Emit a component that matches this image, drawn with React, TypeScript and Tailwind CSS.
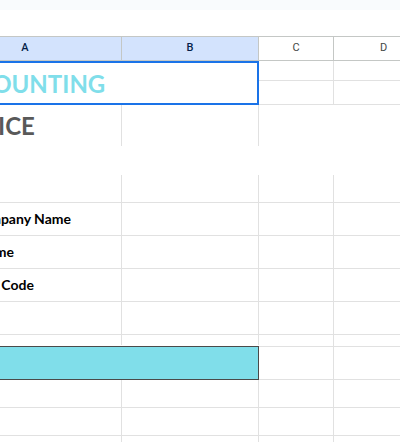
import React from 'react';

const labelFont = { fontFamily: 'Lato, "Noto Sans", sans-serif' };

function LeftRow({ h, text, pad = 'pl-[43px]', bottom = true, lines = true }: { h: string; text?: string; pad?: string; bottom?: boolean; lines?: boolean }) {
    return (
        <div className={`flex ${h} border-b ${bottom && lines ? 'border-[#e1e1e1]' : 'border-transparent'}`}>
            <div className={`w-[193px] shrink-0 border-r ${lines ? 'border-[#e1e1e1]' : 'border-transparent'} flex items-end ${pad} pb-[8px] overflow-hidden`}>
                {text && <span className="text-[14px] leading-[17px] font-bold text-black whitespace-nowrap" style={labelFont}>{text}</span>}
            </div>
            <div className={`w-[137px] shrink-0 border-r ${lines ? 'border-[#e1e1e1]' : 'border-transparent'}`} />
        </div>
    );
}

function RightRow({ h, bottom = true, midLine = true, lines = true }: { h: string; bottom?: boolean; midLine?: boolean; lines?: boolean }) {
    return (
        <div className={`flex ${h} border-b ${bottom && lines ? 'border-[#e1e1e1]' : 'border-transparent'}`}>
            <div className={`w-[75px] shrink-0 border-r ${midLine && lines ? 'border-[#e1e1e1]' : 'border-transparent'}`} />
            <div className={`w-[100px] shrink-0 border-r ${lines ? 'border-[#e1e1e1]' : 'border-transparent'}`} />
        </div>
    );
}

export default function App() {
    return (
        <div className="w-[400px] h-[442px] overflow-hidden bg-white relative">
            {/* toolbar edge */}
            <div className="h-[10px] bg-[#f9fbfd]" />
            <div className="h-[26px]" />

            {/* column headers */}
            <div className="flex h-[25px] -ml-[71px] border-y border-[#c4c7c5] text-[11px]" style={{ fontFamily: 'Roboto, Arial, sans-serif' }}>
                <div className="w-[193px] shrink-0 bg-[#d3e3fd] border-r border-[#c4c7c5] flex items-center justify-center font-medium text-[#041e49]">A</div>
                <div className="w-[137px] shrink-0 bg-[#d3e3fd] border-r border-[#c4c7c5] flex items-center justify-center font-medium text-[#041e49]">B</div>
                <div className="w-[75px] shrink-0 border-r border-[#c4c7c5] flex items-center justify-center text-[#444746]">C</div>
                <div className="w-[100px] shrink-0 border-r border-[#c4c7c5] flex items-center justify-center text-[#444746]">D</div>
                <div className="flex-1" />
            </div>

            {/* sheet body, scrolled so column A starts off-screen */}
            <div className="flex -ml-[71px]">
                <div className="w-[330px] shrink-0 flex flex-col">
                    <div className="h-[44px] border-2 border-[#1a73e8] flex items-end pl-[14px] pb-[5px] overflow-hidden">
                        <span className="text-[24px] leading-[29px] font-bold text-[#80deea] whitespace-nowrap" style={labelFont}>ACCOUNTING</span>
                    </div>
                    <div className="flex h-[41px]">
                        <div className="w-[193px] shrink-0 border-r border-[#e1e1e1] flex items-end pl-[8px] pb-[6px] overflow-hidden">
                            <span className="text-[24px] leading-[29px] font-bold text-[#595959] whitespace-nowrap" style={labelFont}>INVOICE</span>
                        </div>
                        <div className="w-[137px] shrink-0 border-r border-[#e1e1e1]" />
                    </div>
                    <LeftRow h="h-[29px]" lines={false} />
                    <LeftRow h="h-[28px]" />
                    <LeftRow h="h-[33px]" text="Company Name" />
                    <LeftRow h="h-[33px]" text="Name" pad="pl-[48px]" />
                    <LeftRow h="h-[33px]" text="Zip Code" pad="pl-[49px]" />
                    <LeftRow h="h-[33px]" />
                    <LeftRow h="h-[11px]" bottom={false} />
                    <div className="h-[34px] border border-[#4a4a4a] bg-[#80deea]" />
                    <LeftRow h="h-[28px]" />
                    <LeftRow h="h-[28px]" />
                    <LeftRow h="h-[28px]" />
                </div>

                <div className="flex-1 flex flex-col">
                    <RightRow h="h-[20px]" />
                    <RightRow h="h-[24px]" />
                    <RightRow h="h-[41px]" bottom={false} midLine={false} />
                    <RightRow h="h-[29px]" lines={false} />
                    <RightRow h="h-[28px]" />
                    <RightRow h="h-[33px]" />
                    <RightRow h="h-[33px]" />
                    <RightRow h="h-[33px]" />
                    <RightRow h="h-[33px]" />
                    <RightRow h="h-[12px]" />
                    <RightRow h="h-[33px]" />
                    <RightRow h="h-[28px]" />
                    <RightRow h="h-[28px]" />
                    <RightRow h="h-[28px]" />
                </div>
            </div>
        </div>
    );
}
